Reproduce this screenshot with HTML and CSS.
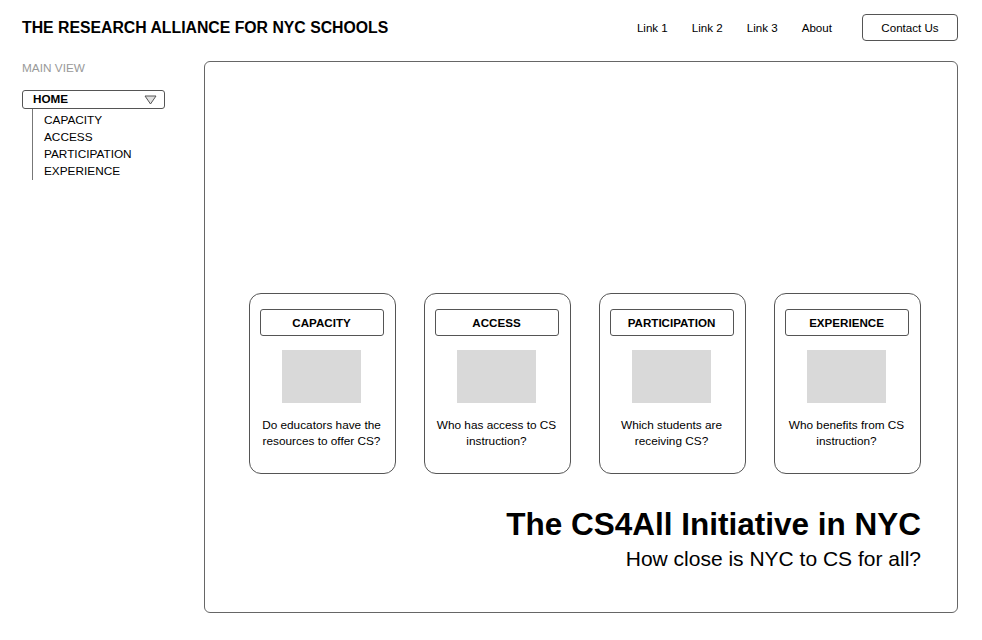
FILE: index.html
```html
<!DOCTYPE html>
<html>
<head>
<meta charset="utf-8">
<link rel="stylesheet" href="styles.css">
</head>
<body>
<header class="topbar">
  <div class="brand">THE RESEARCH ALLIANCE FOR NYC SCHOOLS</div>
  <nav class="nav">
    <a class="nav-link">Link 1</a>
    <a class="nav-link">Link 2</a>
    <a class="nav-link">Link 3</a>
    <a class="nav-link">About</a>
    <a class="contact">Contact Us</a>
  </nav>
</header>
<div class="layout">
  <aside class="sidebar">
    <div class="side-title">MAIN VIEW</div>
    <div class="dropdown">
      <span class="dd-label">HOME</span>
      <svg class="dd-arrow" width="13" height="10" viewBox="0 0 13 10"><polygon points="1,1 12,1 6.5,9" fill="#e0e0e0" stroke="#555" stroke-width="1"/></svg>
    </div>
    <ul class="subnav">
      <li>CAPACITY</li>
      <li>ACCESS</li>
      <li>PARTICIPATION</li>
      <li>EXPERIENCE</li>
    </ul>
  </aside>
  <main class="panel">
    <div class="cards">
      <div class="card">
        <div class="card-label">CAPACITY</div>
        <div class="card-img"></div>
        <p class="card-text">Do educators have the resources to offer CS?</p>
      </div>
      <div class="card">
        <div class="card-label">ACCESS</div>
        <div class="card-img"></div>
        <p class="card-text">Who has access to CS instruction?</p>
      </div>
      <div class="card">
        <div class="card-label">PARTICIPATION</div>
        <div class="card-img"></div>
        <p class="card-text">Which students are receiving CS?</p>
      </div>
      <div class="card">
        <div class="card-label">EXPERIENCE</div>
        <div class="card-img"></div>
        <p class="card-text">Who benefits from CS instruction?</p>
      </div>
    </div>
    <h1 class="hero-title">The CS4All Initiative in NYC</h1>
    <p class="hero-sub">How close is NYC to CS for all?</p>
  </main>
</div>
</body>
</html>
```
FILE: styles.css
```css
* { box-sizing: border-box; }
html, body { margin: 0; padding: 0; background: #fff; }
body {
  font-family: "Liberation Sans", Arial, sans-serif;
  color: #000;
  width: 982px;
  height: 640px;
  overflow: hidden;
}
.topbar {
  display: flex;
  align-items: center;
  justify-content: space-between;
  padding: 14px 24px 0 22px;
  height: 41px;
}
.brand {
  font-weight: bold;
  font-size: 15.8px;
}
.nav {
  display: flex;
  align-items: center;
}
.nav-link {
  font-size: 11.6px;
  margin-right: 24px;
}
.nav-link:nth-child(4) { margin-right: 30px; }
.contact {
  font-size: 11.6px;
  border: 1px solid #555;
  border-radius: 4px;
  width: 96px;
  height: 27px;
  display: flex;
  align-items: center;
  justify-content: center;
}
.layout {
  display: flex;
  padding: 20px 24px 0 22px;
}
.sidebar {
  width: 182px;
  flex: none;
}
.side-title {
  font-size: 11.8px;
  color: #999;
  margin-top: 0;
  line-height: 14px;
}
.dropdown {
  margin-top: 15px;
  width: 143px;
  height: 19px;
  border: 1px solid #555;
  border-radius: 3px;
  display: flex;
  align-items: center;
  justify-content: space-between;
  padding: 0 7px 0 10px;
}
.dd-label {
  font-weight: bold;
  font-size: 11.7px;
  line-height: 14px;
  margin-top: -1px;
}
.dd-arrow { display: block; }
.subnav {
  list-style: none;
  margin: 0 0 0 10px;
  padding: 3px 0 0 11px;
  border-left: 1px solid #777;
  font-size: 11.8px;
  line-height: 17px;
  width: 130px;
}
.panel {
  flex: 1;
  height: 552px;
  border: 1px solid #666;
  border-radius: 6px;
  padding: 231px 36px 0 44px;
}
.cards {
  display: flex;
  gap: 28px;
}
.card {
  width: 147px;
  height: 181px;
  border: 1px solid #555;
  border-radius: 12px;
  padding: 15px 12px 0 10px;
  display: flex;
  flex-direction: column;
  align-items: center;
}
.card-label {
  width: 124px;
  height: 27px;
  flex: none;
  border: 1px solid #555;
  border-radius: 3px;
  font-weight: bold;
  font-size: 11.6px;
  display: flex;
  align-items: center;
  justify-content: center;
}
.card-img {
  width: 79px;
  height: 53px;
  background: #d9d9d9;
  margin-top: 14px;
}
.card-text {
  margin: 14px 0 0 0;
  font-size: 11.8px;
  line-height: 16px;
  text-align: center;
}
.hero-title {
  margin: 32px 0 0 0;
  text-align: right;
  font-size: 31.5px;
  font-weight: bold;
  line-height: 36px;
}
.hero-sub {
  margin: 4px 0 0 0;
  text-align: right;
  font-size: 21px;
  line-height: 25px;
}
```
